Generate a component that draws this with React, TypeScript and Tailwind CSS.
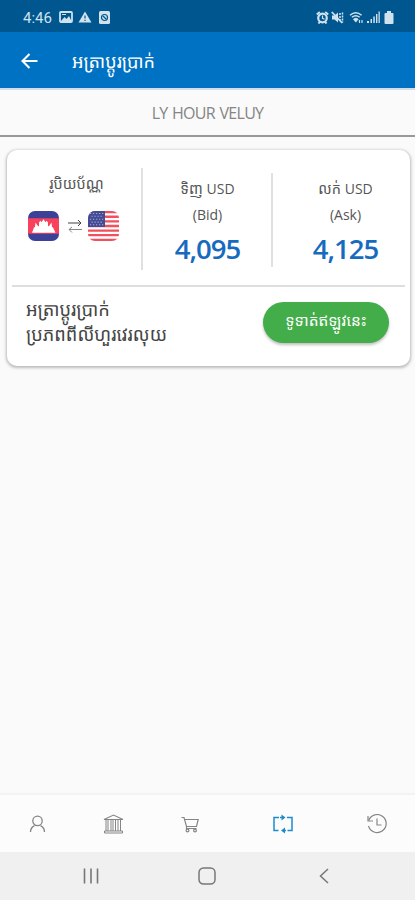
import type { ReactNode } from "react";

const rates = [
  { label: "ទិញ", sub: "(Bid)", value: "4,095" },
  { label: "លក់", sub: "(Ask)", value: "4,125" },
];

function StatusBar() {
  return (
    <div className="flex h-8 items-center justify-between bg-[#00568f] pr-[21px] pl-[23px] pt-0.5 text-[#cfe2ee]">
      <div className="flex items-center">
        <span className="w-[36px] pt-0.5 font-['Roboto',sans-serif] text-[15px] leading-none whitespace-nowrap">4:46</span>
        <svg width="14" height="12" viewBox="0 0 14 12" fill="none">
          <rect x="1" y="1" width="12" height="10" rx="1" stroke="currentColor" strokeWidth="1.8" />
          <path d="M2 10l3.500-4 2 2L10 5l2.500 5z" fill="currentColor" />
          <path d="M3 3.500h4" stroke="currentColor" />
        </svg>
        <svg className="ml-[5px]" width="14" height="12" viewBox="0 0 14 12">
          <path d="M7 .5L13.500 11.500H.5z" fill="currentColor" />
          <path d="M7 4.500v3M7 8.700v1.300" stroke="#00568f" strokeWidth="1.200" />
        </svg>
        <svg className="ml-[7px]" width="11" height="13" viewBox="0 0 11 13" fill="none">
          <rect width="11" height="13" rx="1.500" fill="currentColor" />
          <circle cx="5.500" cy="6.500" r="3" stroke="#00568f" strokeWidth="1.200" />
          <path d="M4 5l3 3" stroke="#00568f" strokeWidth="1.200" />
        </svg>
      </div>
      <div className="flex items-center">
        <svg width="13" height="13" viewBox="0 0 13 13" fill="none" stroke="currentColor">
          <circle cx="6.500" cy="7" r="4.300" strokeWidth="2.200" />
          <path d="M.8 3.500L3.800 1M12.200 3.500L9.200 1M2.500 12.500l1.500-2M10.500 12.500l-1.500-2" strokeWidth="2" />
          <path d="M6.500 4.500V7.300l2 1" strokeWidth="1.200" />
        </svg>
        <svg className="ml-[2px]" width="13" height="13" viewBox="0 0 13 13" fill="none" stroke="currentColor">
          <path d="M1 4.500h2.500L7 1.500v10L3.500 8.500H1z" fill="currentColor" stroke="none" />
          <path d="M.8 1l10.500 11" strokeWidth="1.800" />
          <path d="M9 2v9M11.500 1.500v10" strokeWidth="1.500" strokeDasharray="2 1" />
        </svg>
        <svg className="ml-[5px]" width="15" height="13" viewBox="0 0 15 13" fill="none" stroke="currentColor">
          <path d="M1 4.300Q6.800-.7 12.600 4.300" strokeWidth="1.500" />
          <path d="M2.900 6.300Q6.800 3 10.700 6.300" strokeWidth="1.400" />
          <path d="M4.300 8.200Q6.800 6 9.300 8.200L6.800 11.200z" fill="currentColor" strokeWidth=".5" />
          <path d="M10.500 9v3M13 9v3" strokeWidth="1.200" />
        </svg>
        <svg className="ml-[3px]" width="13" height="12" viewBox="0 0 13 12" fill="currentColor">
          <path d="M0 10h2v2H0zM3.500 8h1.500v4H3.500zM6.300 5.500h1.500v6.500H6.300zM9 3h1.400v9H9zM11.500 .5h1.300v11.500h-1.300z" />
        </svg>
        <svg className="ml-[4px]" width="10" height="13" viewBox="0 0 10 13" fill="currentColor">
          <path d="M3 0h4v2h1.500Q9.500 2 9.500 3v9q0 1-1 1h-7q-1 0-1-1V3q0-1 1-1H3z" />
        </svg>
      </div>
    </div>
  );
}

function CambodiaFlag() {
  return (
    <svg className="overflow-hidden rounded-[7px]" width="31" height="30" viewBox="0 0 31 31" preserveAspectRatio="none">
      <path d="M0 0h31v31H0z" fill="#3b4197" />
      <path d="M0 7.500h31v16H0z" fill="#f8415c" />
      <path
        d="M4 22.500l2-5.500 1-.5.500-4.500 2 3 1.500 1V12l1.500-2 1 1.500L15.500 8.500 17.500 11.500l1-1.500L20 12v4l1.500-1 2-3 .5 4.500 1 .5 2.500 5.500z"
        fill="#fff"
      />
    </svg>
  );
}

function UsFlag() {
  return (
    <svg className="overflow-hidden rounded-[7px]" width="31" height="30" viewBox="0 0 31 31" preserveAspectRatio="none">
      <path d="M0 0h31v31H0z" fill="#fff" />
      <path
        d="M0 1.200h31M0 5.960h31M0 10.720h31M0 15.480h31M0 20.240h31M0 25h31M0 29.800h31"
        stroke="#f2505f"
        strokeWidth="2.400"
      />
      <path d="M0 0h17v16.600H0z" fill="#454c96" />
      <path
        d="M2 2.500h14M3.500 5.500h12M2 8.500h14M3.500 11.500h12M2 14.300h14"
        stroke="#a9acd3"
        strokeWidth="1.100"
        strokeDasharray="1.200 1.800"
      />
    </svg>
  );
}

function NavItem({ className, children }: { className: string; children: ReactNode }) {
  return <button className={`flex h-full items-center justify-center ${className}`}>{children}</button>;
}

function BottomNav() {
  return (
    <nav className="flex h-[59px] items-center border-t-2 border-[#f3f3f3] bg-[#fcfcfc] pt-px text-[#858585]">
      <NavItem className="w-[75px]">
        <svg width="17" height="18" viewBox="0 0 17 18" fill="none" stroke="currentColor" strokeWidth="1.300">
          <circle cx="8.500" cy="5.900" r="4.700" />
          <path d="M1.500 17c0-3 1.500-5 4-6.300M15.500 17c0-3-1.500-5-4-6.300" />
        </svg>
      </NavItem>
      <NavItem className="w-[77px]">
        <svg width="21" height="20" viewBox="0 0 21 20" fill="none" stroke="currentColor">
          <path d="M1 5.500L10.500 1 20 5.500z" strokeWidth="1.100" />
          <path d="M3 6v11M5 6v11M8 6v11M10 6v11M12.500 6v11M15 6v11M17.500 6v11" strokeWidth="1" />
          <path d="M1.500 17h18v2h-18z" />
        </svg>
      </NavItem>
      <NavItem className="w-[75px]">
        <svg width="18" height="17" viewBox="0 0 18 17" fill="none" stroke="currentColor" strokeWidth="1.200">
          <path d="M.5 1.500h2.500l2.500 9H15.500l1.700-7H3.700M5.500 10.500v2h10" />
          <circle cx="6.500" cy="14.500" r="1.400" />
          <circle cx="14" cy="14.500" r="1.400" />
        </svg>
      </NavItem>
      <NavItem className="w-[112px] text-[#1c8ccb]">
        <svg width="20" height="20" viewBox="0 0 20 20" fill="none" stroke="currentColor" strokeWidth="1.500">
          <path d="M6 3.500H1v13h4.500M14 3.500H19v13h-4.500M7 3.500h3M10 16.500h3" />
          <path d="M8.500 .5v6l4-3zM12 13.500v6l-4-3z" fill="currentColor" stroke="none" />
        </svg>
      </NavItem>
      <NavItem className="w-[76px]">
        <svg width="20" height="20" viewBox="0 0 20 20" fill="none" stroke="currentColor" strokeWidth="1.200">
          <path d="M1.700 6.500A9 9 0 1 1 1.500 12" />
          <path d="M1 2v5h5M10 4.500v6.500h4.500" />
        </svg>
      </NavItem>
    </nav>
  );
}

function SystemBar() {
  return (
    <div className="flex h-12 items-center bg-[#f0f0f0] px-[34px] text-[#777]">
      <div className="flex flex-1 justify-center">
        <svg width="16" height="16" viewBox="0 0 16 16" stroke="currentColor" strokeWidth="1.600">
          <path d="M1.500 .5v15M8 .5v15M14.500 .5v15" />
        </svg>
      </div>
      <div className="flex flex-1 justify-center pl-px">
        <svg width="18" height="18" viewBox="0 0 18 18" fill="none" stroke="currentColor" strokeWidth="1.500">
          <rect x="1" y="1" width="16" height="16" rx="4.500" />
        </svg>
      </div>
      <div className="flex flex-1 justify-center pl-0.5">
        <svg width="10" height="16" viewBox="0 0 10 16" fill="none" stroke="currentColor" strokeWidth="1.500">
          <path d="M9 1L1.500 8 9 15" />
        </svg>
      </div>
    </div>
  );
}

export default function App() {
  return (
    <div className="flex h-[900px] w-[415px] flex-col overflow-hidden bg-[#fafafa] font-['Open_Sans','Noto_Sans','Noto_Sans_Khmer',sans-serif]">
      <StatusBar />
      <header className="flex h-14 items-center bg-[#0072c3] pt-0.5 pl-[21px] text-white">
        <svg width="17" height="16" viewBox="0 0 17 16" fill="none" stroke="currentColor" strokeWidth="2.100">
          <path d="M8.500 1L1.500 8l7 7M1.500 8h15" />
        </svg>
        <h1 className="ml-[34px] text-[18px] whitespace-nowrap">អត្រាប្តូរប្រាក់</h1>
      </header>
      <div className="flex h-[49px] items-center justify-center border-t-2 border-b-2 border-t-[#d3dde8] border-b-[#999]">
        <span className="text-[16px] tracking-[-0.700px] text-[#858585] [word-spacing:1px]">LY HOUR VELUY</span>
      </div>

      <main className="flex-1 px-[7px] pt-[13px]">
        <section className="flex h-[216px] w-[403px] flex-col rounded-[10px] bg-white shadow-[0_1px_3px_1px_rgba(0,0,0,0.25)]">
          <div className="mx-[5px] flex h-[137px] items-center border-b-2 border-[#dedede] pt-[3px]">
            <div className="flex h-full w-[129px] flex-col items-center pt-[19px]">
              <span className="text-[14.500px] leading-[24px] whitespace-nowrap text-[#555]">រូបិយប័ណ្ណ</span>
              <div className="mt-[15px] mr-[6px] flex items-center">
                <CambodiaFlag />
                <svg className="mr-[6px] ml-[9px]" width="14" height="14" viewBox="0 0 14 14" fill="none" stroke="#444" strokeWidth="1">
                  <path d="M0 4h13M10 1l3 3-3 3" />
                  <path d="M14 10.500H1M4 8l-3 2.500L4 13.500" stroke="#888" />
                </svg>
                <UsFlag />
              </div>
            </div>
            <div className="h-[102px] w-0.5 bg-[#e0e0e0]" />
            {rates.map((rate, i) => (
              <div
                key={rate.sub}
                className={`mt-0.5 flex h-[94px] flex-col items-center ${i === 0 ? "w-[130px] border-r-2 border-[#e0e0e0] pl-px" : "flex-1 pl-[13px]"}`}
              >
                <span className="mt-[3px] text-[14.500px] leading-[26px] whitespace-nowrap text-[#555]">
                  {rate.label} <span className="text-[14px]">USD</span>
                </span>
                <span className="text-[14px] leading-[26px] text-[#555]">{rate.sub}</span>
                <span className="text-[27.500px] leading-[41px] font-semibold tracking-[-1px] text-[#176bbf]">{rate.value}</span>
              </div>
            ))}
          </div>
          <div className="flex flex-1 items-center justify-between pr-[21px] pb-[9px] pl-[19px]">
            <p className="text-[18.200px] leading-[25px] whitespace-nowrap text-[#444]">
              អត្រាប្តូរប្រាក់
              <br />
              ប្រភពពីលីហួរវេរលុយ
            </p>
            <button className="h-[41px] w-[126px] rounded-full bg-[#43ad49] pb-0.5 text-[15.500px] whitespace-nowrap text-white shadow-[0_2px_3px_rgba(0,0,0,0.25)]">
              ទូទាត់ឥឡូវនេះ
            </button>
          </div>
        </section>
      </main>

      <BottomNav />
      <SystemBar />
    </div>
  );
}
